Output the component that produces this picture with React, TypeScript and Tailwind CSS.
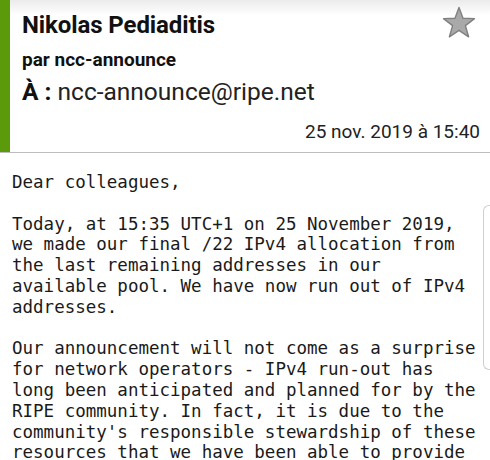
export default function App() {
  const body = [
    'Dear colleagues,',
    '',
    'Today, at 15:35 UTC+1 on 25 November 2019,',
    'we made our final /22 IPv4 allocation from',
    'the last remaining addresses in our',
    'available pool. We have now run out of IPv4',
    'addresses.',
    '',
    'Our announcement will not come as a surprise',
    'for network operators - IPv4 run-out has',
    'long been anticipated and planned for by the',
    "RIPE community. In fact, it is due to the",
    "community's responsible stewardship of these",
    'resources that we have been able to provide',
  ];

  return (
    <div className="relative w-[490px] h-[460px] overflow-hidden bg-white">
      {/* en-tête du message */}
      <div className="flex h-[153px] border-b border-[#bdbdbd] bg-gradient-to-b from-[#ebebeb] via-white via-[10%] to-white">
        <div className="w-[10px] shrink-0 bg-[#5b9a0a]" />
        <div className="flex-1 flex flex-col pl-[12px] pr-[10px] font-['Roboto',sans-serif] text-[#111]">
          <div className="flex items-start justify-between">
            <div className="pt-[10px] text-[24px] leading-[30px] font-bold tracking-[-0.1px]">
              Nikolas Pediaditis
            </div>
            <svg className="mt-[6px] mr-[4px]" width="34" height="33" viewBox="0 0 34 33">
              <polygon
                points="17,1.5 21,12.3 32.5,12.6 23.4,19.6 26.6,30.8 17,24.3 7.4,30.8 10.6,19.6 1.5,12.6 13,12.3"
                fill="#a9a9a9"
                stroke="#808080"
                strokeWidth="1.4"
                strokeLinejoin="round"
              />
            </svg>
          </div>
          <div className="mt-[8px] text-[19px] leading-[24px] font-bold">par ncc-announce</div>
          <div className="mt-[5px] text-[24.5px] leading-[30px]">
            <span className="font-bold">À :</span>{' '}
            <span className="text-[#222]">ncc-announce@ripe.net</span>
          </div>
          <div className="mt-[13px] text-right text-[19px] leading-[24px] text-[#222]">
            25 nov. 2019 à 15:40
          </div>
        </div>
      </div>

      {/* corps du message */}
      <div className="pl-[12px] pt-[19px] font-['DejaVu_Sans_Mono',monospace] text-[17.5px] leading-[20.8px] text-[#1a1a1a] whitespace-pre">
        {body.map((line, i) => (
          <div key={i} className="h-[20.8px]">
            {line}
          </div>
        ))}
      </div>

      {/* indicateur de défilement */}
      <div className="absolute right-0 top-[205px] h-[165px] w-[7px] rounded-l-[6px] border border-r-0 border-[#cfcfcf] bg-white" />
    </div>
  );
}
